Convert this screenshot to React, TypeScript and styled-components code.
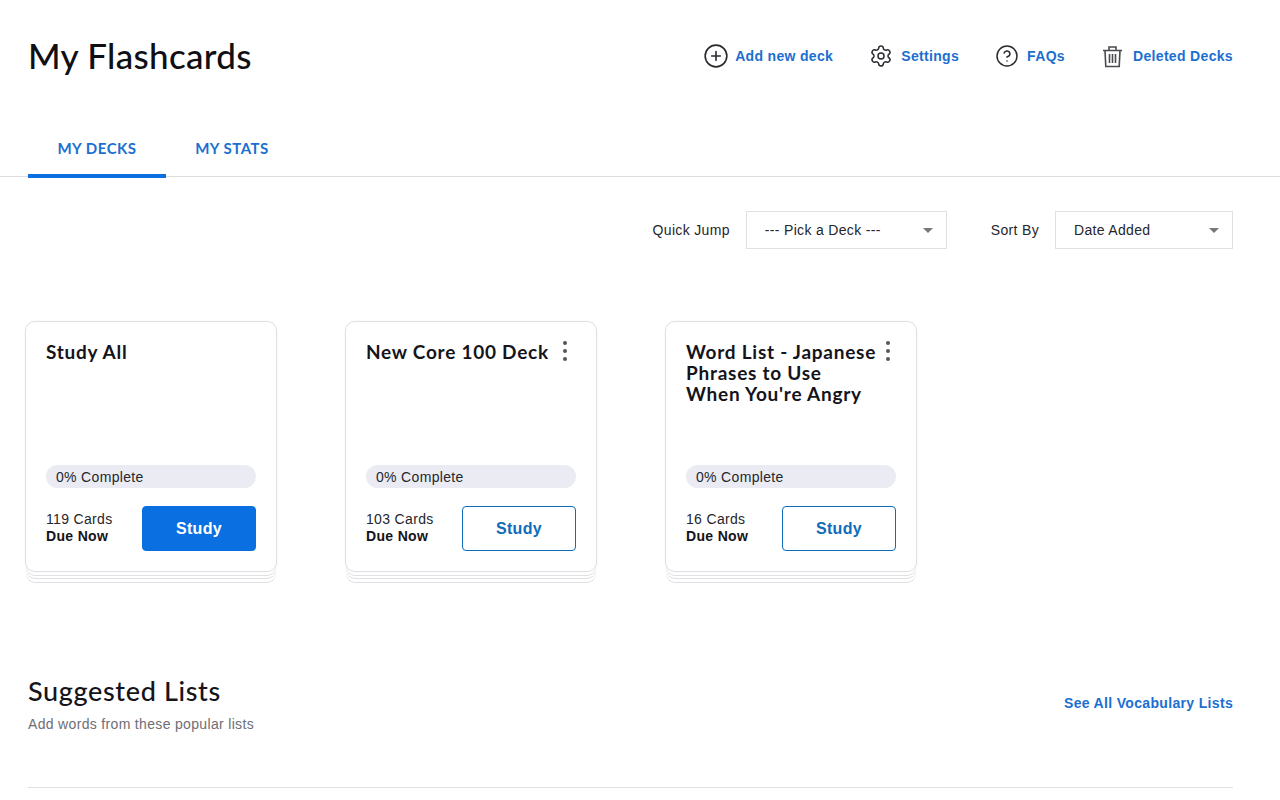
import React, { FC } from 'react';
import styled, { createGlobalStyle } from 'styled-components';
import { CirclePlus, CircleHelp, Settings } from 'lucide-react';

const GlobalStyle = createGlobalStyle`
  html, body {
    margin: 0;
    padding: 0;
    height: 800px;
    overflow: hidden;
    background: #ffffff;
    font-family: 'Liberation Sans', Arial, sans-serif;
    color: #1c1c22;
    letter-spacing: 0.33px;
  }
  * { box-sizing: border-box; }
`;

const Page = styled.div`
  width: 1280px;
  height: 800px;
  overflow: hidden;
`;

const Header = styled.header`
  display: flex;
  align-items: center;
  justify-content: space-between;
  height: 113px;
  padding: 0 47px 0 28px;
`;

const Title = styled.h1`
  margin: -3px 0 0;
  font-family: Lato, sans-serif;
  font-size: 35px;
  font-weight: 500;
  color: #0f0f14;
  letter-spacing: 0.3px;
`;

const Actions = styled.nav`
  display: flex;
  align-items: center;
  gap: 36px;
  margin-top: -1px;
`;

const Action = styled.a<{ $gap: number }>`
  display: flex;
  align-items: center;
  gap: ${(p) => p.$gap}px;
  font-size: 14px;
  font-weight: 700;
  color: #1b6fd0;
  text-decoration: none;
  svg {
    color: #2a2a30;
    flex: none;
  }
`;

const Tabs = styled.div`
  display: flex;
  height: 64px;
  padding-left: 28px;
  border-bottom: 1px solid #dcdde0;
`;

const Tab = styled.a<{ $active?: boolean }>`
  display: flex;
  align-items: center;
  justify-content: center;
  width: ${(p) => (p.$active ? '138px' : '132px')};
  height: 65px;
  padding-top: 8px;
  font-family: Lato, sans-serif;
  font-size: 15px;
  font-weight: 700;
  letter-spacing: 0.5px;
  color: #1b6fd0;
  border-bottom: 4px solid ${(p) => (p.$active ? '#0a6fe0' : 'transparent')};
`;

const Filters = styled.div`
  display: flex;
  justify-content: flex-end;
  align-items: center;
  gap: 44px;
  padding: 34px 47px 0 0;
`;

const Filter = styled.label`
  display: flex;
  align-items: center;
  gap: 16px;
  font-size: 14px;
  color: #26262c;
`;

const SelectBox = styled.div<{ $width: number }>`
  display: flex;
  align-items: center;
  justify-content: space-between;
  width: ${(p) => p.$width}px;
  height: 38px;
  padding: 0 13px 0 18px;
  border: 1px solid #dfe0e3;
  font-size: 14px;
  color: #26262c;
  &::after {
    content: '';
    border-left: 5px solid transparent;
    border-right: 5px solid transparent;
    border-top: 5px solid #77777d;
  }
`;

const Decks = styled.div`
  display: flex;
  gap: 68px;
  padding: 72px 0 0 25px;
`;

const Card = styled.article`
  display: flex;
  flex-direction: column;
  width: 252px;
  height: 251px;
  padding: 19px 20px 20px;
  background: #ffffff;
  border: 1px solid #dfe0e3;
  border-radius: 10px;
  box-shadow:
    0 0 3px rgba(0, 0, 0, 0.05),
    0 4px 0 -1px #ffffff,
    0 5px 0 -1px #dfe0e3,
    0 7px 0 -1px #ffffff,
    0 8px 0 -1px #dfe0e3,
    0 11px 0 -1px #ffffff,
    0 12px 0 -1px #dfe0e3;
  margin-bottom: 12px;
`;

const CardHead = styled.div`
  display: flex;
  align-items: flex-start;
  height: 124px;
`;

const CardTitle = styled.h3`
  margin: 0;
  font-family: Lato, sans-serif;
  font-size: 19px;
  font-weight: 700;
  line-height: 21px;
  letter-spacing: 0.75px;
  white-space: nowrap;
  color: #14141a;
`;

const MoreButton = styled.span<{ $offset: number }>`
  display: flex;
  flex-direction: column;
  gap: 4px;
  margin-left: ${(p) => p.$offset}px;
`;

const Dot = styled.i`
  width: 4px;
  height: 4px;
  border-radius: 50%;
  background: #55555b;
`;

const Progress = styled.div`
  display: flex;
  align-items: center;
  height: 23px;
  padding-left: 10px;
  border-radius: 12px;
  background: #ebecf3;
  font-size: 14px;
  color: #26262c;
`;

const CardFoot = styled.div`
  display: flex;
  justify-content: space-between;
  align-items: center;
  margin-top: 18px;
`;

const Counts = styled.div`
  margin-bottom: 2px;
  font-size: 14px;
  line-height: 17px;
  color: #26262c;
  b {
    display: block;
    color: #14141a;
  }
`;

const StudyButton = styled.button<{ $primary?: boolean }>`
  width: 114px;
  height: 45px;
  border-radius: 4px;
  border: 1px solid ${(p) => (p.$primary ? '#0a6fe0' : '#0f6cb8')};
  background: ${(p) => (p.$primary ? '#0a6fe0' : '#ffffff')};
  color: ${(p) => (p.$primary ? '#ffffff' : '#0f6cb8')};
  font-family: 'Liberation Sans', Arial, sans-serif;
  font-size: 16px;
  font-weight: 700;
  letter-spacing: 0.33px;
`;

const Suggested = styled.section`
  display: flex;
  justify-content: space-between;
  margin: 91px 47px 0 28px;
  height: 113px;
  border-bottom: 1px solid #dfe0e3;
`;

const SuggestedTitle = styled.h2`
  margin: 0;
  font-family: Lato, sans-serif;
  font-size: 27px;
  font-weight: 500;
  line-height: 32px;
  letter-spacing: 0.65px;
  color: #14141a;
`;

const SuggestedSub = styled.p`
  margin: 9px 0 0;
  font-size: 14px;
  color: #6e6e74;
`;

const SeeAll = styled.a`
  margin-top: 20px;
  font-size: 14px;
  font-weight: 700;
  color: #1b6fd0;
`;

const TrashIcon: FC = () => (
  <svg width="23" height="23" viewBox="0 0 23 23" fill="none" stroke="#4a4a50" strokeWidth="1.6">
    <path d="M2 5.5h19M8 5V2h7v3" />
    <path d="M4 5.5l.8 16h13.4l.8-16" />
    <path d="M8.5 9v9M11.5 9v9M14.5 9v9" />
  </svg>
);

type DeckType = {
  title: React.ReactNode;
  cards: number;
  primary?: boolean;
  menuOffset?: number;
};

const decks: DeckType[] = [
  { title: 'Study All', cards: 119, primary: true },
  { title: 'New Core 100 Deck', cards: 103, menuOffset: 14 },
  {
    title: (
      <>
        Word List - Japanese
        <br />
        Phrases to Use
        <br />
        When You're Angry
      </>
    ),
    cards: 16,
    menuOffset: 10,
  },
];

const Deck: FC<DeckType> = ({ title, cards, primary, menuOffset }) => (
  <Card>
    <CardHead>
      <CardTitle>{title}</CardTitle>
      {menuOffset !== undefined && (
        <MoreButton $offset={menuOffset}>
          <Dot />
          <Dot />
          <Dot />
        </MoreButton>
      )}
    </CardHead>
    <Progress>0% Complete</Progress>
    <CardFoot>
      <Counts>
        {cards} Cards
        <b>Due Now</b>
      </Counts>
      <StudyButton $primary={primary}>Study</StudyButton>
    </CardFoot>
  </Card>
);

const App: FC = () => (
  <Page>
    <GlobalStyle />
    <Header>
      <Title>My Flashcards</Title>
      <Actions>
        <Action $gap={6}>
          <CirclePlus size={26} strokeWidth={1.5} />
          Add new deck
        </Action>
        <Action $gap={8}>
          <Settings size={24} strokeWidth={1.5} />
          Settings
        </Action>
        <Action $gap={8}>
          <CircleHelp size={24} strokeWidth={1.5} />
          FAQs
        </Action>
        <Action $gap={9}>
          <TrashIcon />
          Deleted Decks
        </Action>
      </Actions>
    </Header>
    <Tabs>
      <Tab $active>MY DECKS</Tab>
      <Tab>MY STATS</Tab>
    </Tabs>
    <Filters>
      <Filter>
        Quick Jump
        <SelectBox $width={201}>--- Pick a Deck ---</SelectBox>
      </Filter>
      <Filter>
        Sort By
        <SelectBox $width={178}>Date Added</SelectBox>
      </Filter>
    </Filters>
    <Decks>
      {decks.map((d) => (
        <Deck key={d.cards} {...d} />
      ))}
    </Decks>
    <Suggested>
      <div>
        <SuggestedTitle>Suggested Lists</SuggestedTitle>
        <SuggestedSub>Add words from these popular lists</SuggestedSub>
      </div>
      <SeeAll>See All Vocabulary Lists</SeeAll>
    </Suggested>
  </Page>
);

export default App;
